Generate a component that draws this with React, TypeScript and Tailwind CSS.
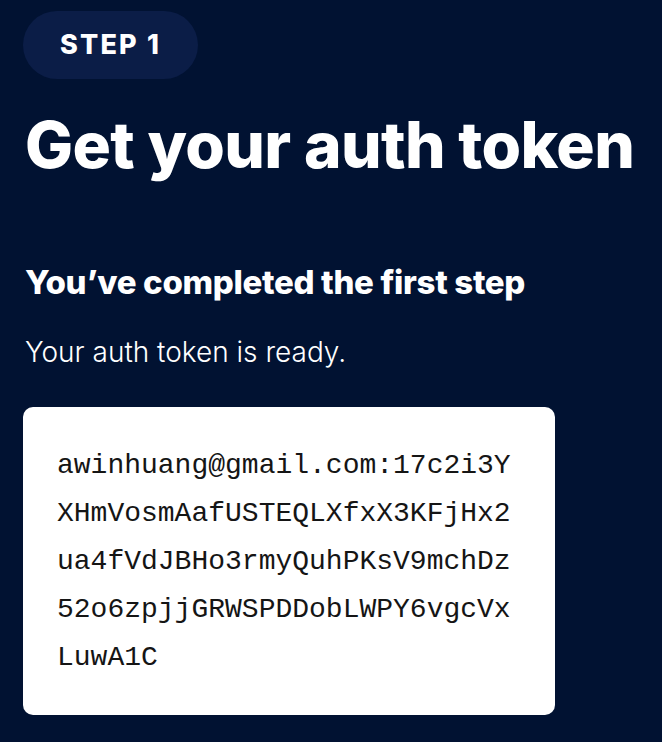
export default function App() {
  const token =
    "awinhuang@gmail.com:17c2i3YXHmVosmAafUSTEQLXfxX3KFjHx2ua4fVdJBHo3rmyQuhPKsV9mchDz52o6zpjjGRWSPDDobLWPY6vgcVxLuwA1C";

  return (
    <div className="min-h-[742px] w-full bg-[#011232] px-[23px] pt-[11px] pb-[26px] font-['Inter',sans-serif] text-white">
      <div className="flex h-[68px] w-[175px] items-center justify-center rounded-full bg-[#0b1d47]">
        <span className="text-[27px] font-extrabold tracking-[0.08em]">STEP 1</span>
      </div>

      <h1 className="mt-[27px] pl-[2px] text-[64px] leading-[77px] font-extrabold tracking-[-0.01em]">
        Get your auth token
      </h1>

      <h2 className="mt-[79px] pl-[2px] text-[33px] leading-[40px] font-extrabold tracking-[-0.01em]">
        You’ve completed the first step
      </h2>

      <p className="mt-[32px] pl-[2px] text-[28px] leading-[36px] font-light">Your auth token is ready.</p>

      <div className="mt-[37px] w-[532px] rounded-[10px] bg-white px-[34px] pt-[35px] pb-[33px]">
        <p className="w-[462px] break-all font-['Liberation_Mono',monospace] text-[28px] leading-[48px] text-[#151515]">
          {token}
        </p>
      </div>
    </div>
  );
}
